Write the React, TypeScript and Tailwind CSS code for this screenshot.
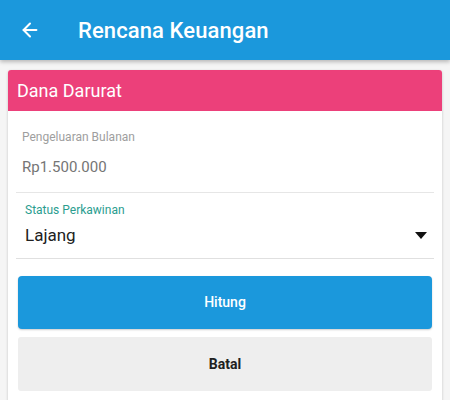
import { ArrowLeft } from 'lucide-react'

export default function App() {
  return (
    <div className="w-[450px] h-[400px] overflow-hidden bg-[#f5f5f5] font-['Roboto',sans-serif]">
      <header className="h-[60px] bg-[#1b98dc] flex items-center shadow-[0_2px_4px_rgba(0,0,0,0.25)] relative z-10">
        <ArrowLeft className="w-[22px] h-[22px] text-white ml-[19px]" strokeWidth={2.2} />
        <h1 className="ml-[37px] text-white text-[22px] font-medium tracking-[0.1px]">Rencana Keuangan</h1>
      </header>

      <div className="mx-[8px] mt-[10px] bg-white rounded-t-[3px] shadow-[0_1px_3px_rgba(0,0,0,0.2)] pb-[20px]">
        <div className="h-[41px] bg-[#ec407a] rounded-t-[3px] flex items-center px-[9px]">
          <span className="text-white text-[18px]">Dana Darurat</span>
        </div>

        <div className="px-[8px]">
          <div className="border-b border-[#e6e6e6] pt-[18px] pb-[15px] px-[6px]">
            <div className="text-[12px] text-[#9e9e9e] leading-[16px]">Pengeluaran Bulanan</div>
            <div className="text-[15px] text-[#757575] mt-[12px] leading-[20px]">Rp1.500.000</div>
          </div>

          <div className="border-b border-[#e0e0e0] pt-[9px] pb-[11px] px-[9px]">
            <div className="text-[12px] text-[#2a9d8f] leading-[16px]">Status Perkawinan</div>
            <div className="flex items-center justify-between mt-[5px]">
              <span className="text-[17px] text-[#212121] leading-[24px]">Lajang</span>
              <svg width="12" height="7" viewBox="0 0 12 7" className="mr-[-2px]">
                <path d="M0 0 L12 0 L6 7 Z" fill="#111" />
              </svg>
            </div>
          </div>

          <div className="px-[2px] pt-[17px] flex flex-col gap-[8px]">
            <button className="h-[53px] w-full rounded-[4px] bg-[#1b98dc] text-white text-[14px] font-medium shadow-[0_1px_2px_rgba(0,0,0,0.2)]">
              Hitung
            </button>
            <button className="h-[54px] w-full rounded-[3px] bg-[#eeeeee] text-[#212121] text-[14px] font-bold">
              Batal
            </button>
          </div>
        </div>
      </div>
    </div>
  )
}
